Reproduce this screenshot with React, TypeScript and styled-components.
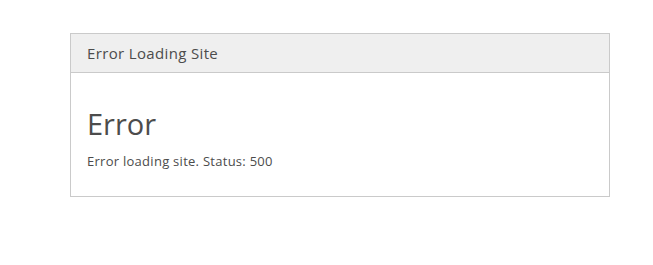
import React from "react";
import styled, { createGlobalStyle } from "styled-components";

const Global = createGlobalStyle`
  html, body { margin: 0; padding: 0; background: #fff; }
  body { font-family: "Open Sans", "Noto Sans", sans-serif; color: #4c4c4c; }
`;

const Page = styled.div`
  padding: 33px 0 0 70px;
`;

const Panel = styled.section`
  width: 540px;
  box-sizing: border-box;
  border: 1px solid #cacaca;
  background: #fff;
`;

const PanelHeader = styled.header`
  height: 38px;
  display: flex;
  align-items: center;
  padding: 0 16px;
  background: #efefef;
  border-bottom: 1px solid #cacaca;
  font-size: 15px;
  letter-spacing: 0.35px;
  color: #4c4c4c;
`;

const PanelBody = styled.div`
  height: 123px;
  padding: 0 16px;
  box-sizing: border-box;
`;

const Title = styled.h1`
  margin: 0;
  padding-top: 33px;
  font-size: 29px;
  font-weight: 400;
  line-height: 36px;
  color: #4c4c4c;
`;

const Message = styled.p`
  margin: 10px 0 0;
  font-size: 13px;
  letter-spacing: 0.27px;
  line-height: 18px;
  color: #4c4c4c;
`;

export default function App() {
  return (
    <>
      <Global />
      <Page>
        <Panel>
          <PanelHeader>Error Loading Site</PanelHeader>
          <PanelBody>
            <Title>Error</Title>
            <Message>Error loading site. Status: 500</Message>
          </PanelBody>
        </Panel>
      </Page>
    </>
  );
}
